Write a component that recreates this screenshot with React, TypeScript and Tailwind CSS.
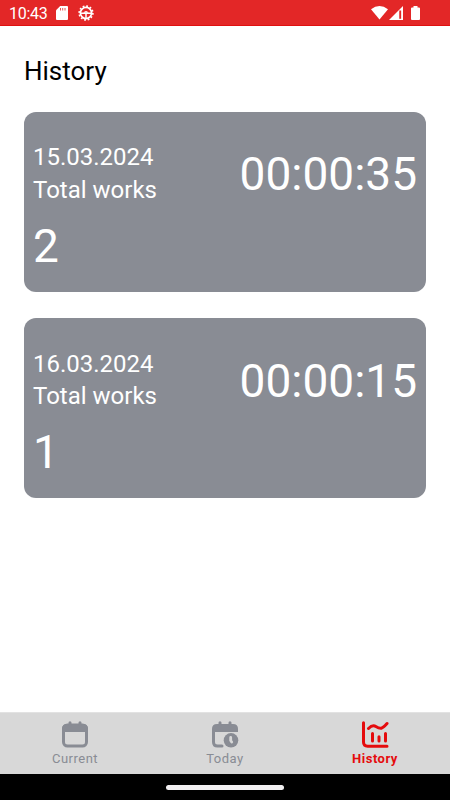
import React from 'react';

interface DayRecord {
  date: string;
  total: number;
  time: string;
}

const records: DayRecord[] = [
  { date: '15.03.2024', total: 2, time: '00:00:35' },
  { date: '16.03.2024', total: 1, time: '00:00:15' },
];

function StatusBar() {
  return (
    <header className="flex h-[26px] shrink-0 items-center justify-between border-b border-[#e01010] bg-[#e32727] pl-[9px] pr-[30px] text-white">
      <div className="flex items-center">
        <span className="w-[47px] pt-[3px] text-[16px] leading-5 tracking-[-0.3px]">10:43</span>
        <svg className="h-[14px] w-[12px]" viewBox="0 0 12 14" fill="currentColor">
          <path d="M4.2 0H11q1 0 1 1v12q0 1-1 1H1q-1 0-1-1V4.2z" />
          <path d="M4.5 2v2.5M6.7 2v2.5M9 2v2.5" stroke="#e32727" strokeWidth="0.8" />
        </svg>
        <svg className="ml-[10px] h-4 w-4" viewBox="0 0 16 16" fill="none" stroke="currentColor">
          <circle cx="8" cy="8" r="5.6" strokeWidth="1.7" />
          <circle cx="8" cy="8" r="6.9" strokeWidth="1.6" strokeDasharray="1.8 1.813" />
          <path d="M3 8.2h10M8 8v5" strokeWidth="1.5" />
          <path d="M5.3 7.700q2.700-3.200 5.400 0z" fill="currentColor" stroke="none" />
        </svg>
      </div>
      <div className="flex items-center">
        <svg className="h-[15px] w-[17px]" viewBox="0 0 17 15" fill="currentColor">
          <path d="M0 4.3Q8.5-2.5 17 4.3L8.5 14.5z" />
        </svg>
        <svg className="ml-px h-[14px] w-[14px]" viewBox="0 0 14 14" fill="currentColor">
          <path d="M14 0v14H0z" />
          <path d="M11.200 4.5v8.300" stroke="#e32727" strokeWidth="1.9" />
        </svg>
        <svg className="ml-2 h-[14px] w-[9px]" viewBox="0 0 9 14" fill="currentColor">
          <path d="M2.500 0h4v1.500H8q1 0 1 1V13q0 1-1 1H1q-1 0-1-1V2.5q0-1 1-1h1.500z" />
        </svg>
      </div>
    </header>
  );
}

function HistoryCard({ date, total, time }: DayRecord) {
  return (
    <div className="flex h-[180px] justify-between rounded-[12px] bg-[#898c94] px-[9px] text-white">
      <div className="pt-[29.9px]">
        <p className="text-[24px] leading-[32px]">{date}</p>
        <p className="pt-[0.6px] text-[24px] leading-[32px]">Total works</p>
        <p className="pt-[13px] text-[46px] leading-[54px]">{total}</p>
      </div>
      <p className="pt-[35.5px] text-[46px] leading-[54px]">{time}</p>
    </div>
  );
}

function CalendarIcon() {
  return (
    <svg className="h-[27px] w-[28px]" viewBox="0 0 28 27" fill="none" stroke="currentColor">
      <rect x="2.5" y="4" width="23" height="21" rx="4" strokeWidth="3" />
      <path d="M1 11V8q0-5 5-5h16q5 0 5 5v3z" fill="currentColor" stroke="none" />
      <path d="M9 1.8v2M19 1.8v2" strokeWidth="3" strokeLinecap="round" />
    </svg>
  );
}

function CalendarClockIcon() {
  return (
    <svg className="h-[27px] w-[28px]" viewBox="0 0 28 27" fill="none" stroke="currentColor">
      <path d="M2.5 9v12q0 4 4 4h4.500" strokeWidth="3" strokeLinecap="round" />
      <path d="M1 11V8q0-5 5-5h16q5 0 5 5v3z" fill="currentColor" stroke="none" />
      <path d="M9 1.8v2M19 1.8v2" strokeWidth="3" strokeLinecap="round" />
      <circle cx="20" cy="19.300" r="7.300" fill="currentColor" stroke="none" />
      <path d="M19.700 16.500v3l1 1.500" stroke="#d8d8d8" strokeWidth="2.800" strokeLinecap="round" strokeLinejoin="round" />
    </svg>
  );
}

function ChartIcon() {
  return (
    <svg className="h-[27px] w-[28px]" viewBox="0 0 28 27" fill="none" stroke="currentColor" strokeWidth="3" strokeLinecap="round">
      <path d="M2.500 1.800V21q0 4.200 4.200 4.200H26" />
      <path d="M7.500 7.500q4-4 7.300-2t5.500 1.700q2-.5 5.700-4.700" />
      <path d="M11.500 12.500v7.500M18 15.800V20M24.500 12.500v7.500" />
    </svg>
  );
}

const tabs = [
  { label: 'Current', icon: CalendarIcon, active: false },
  { label: 'Today', icon: CalendarClockIcon, active: false },
  { label: 'History', icon: ChartIcon, active: true },
];

export default function App() {
  return (
    <div className="flex h-screen w-full flex-col overflow-hidden bg-white font-['Roboto',sans-serif]">
      <StatusBar />

      <main className="flex-1 px-6 pt-[29px]">
        <h1 className="text-[26px] leading-[32px] text-black">History</h1>
        <div className="mt-[24.5px] flex flex-col gap-[26.5px]">
          {records.map((record) => (
            <HistoryCard key={record.date} {...record} />
          ))}
        </div>
      </main>

      <nav className="grid h-[62px] shrink-0 grid-cols-3 border-t border-[#e2e2e2] bg-[#d8d8d8]">
        {tabs.map(({ label, icon: Icon, active }) => (
          <button
            key={label}
            className={`flex flex-col items-center pt-2 ${active ? 'font-bold text-[#e50b0d]' : 'text-[#898c94]'}`}
          >
            <Icon />
            <span className="mt-[2px] text-[13px] leading-[18px] tracking-[0.5px]">{label}</span>
          </button>
        ))}
      </nav>

      <div className="flex h-[26px] shrink-0 items-center justify-center bg-black">
        <div className="h-[5px] w-[118px] rounded-full bg-[#f1eff1]" />
      </div>
    </div>
  );
}
